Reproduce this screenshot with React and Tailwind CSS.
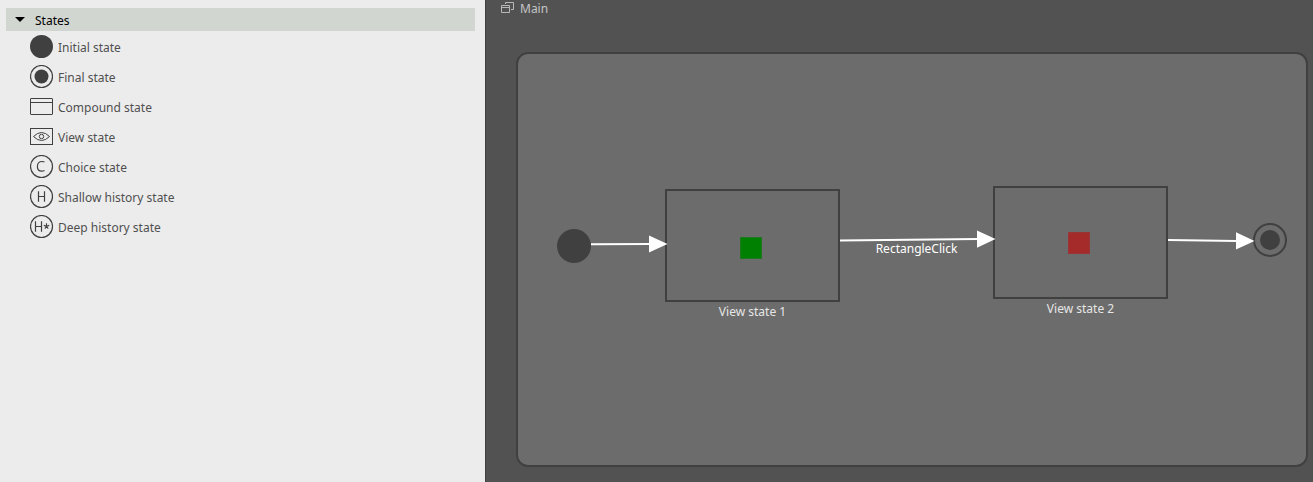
import React, { useState } from "react";

const ring = <circle cx="12" cy="12" r="11" fill="none" stroke="#404040" strokeWidth="1.2" />;

const icons = {
  initial: <circle cx="12" cy="12" r="11.5" fill="#404040" />,
  final: (
    <>
      {ring}
      <circle cx="12" cy="12" r="7" fill="#404040" />
    </>
  ),
  compound: (
    <g fill="none" stroke="#404040">
      <rect x="1" y="4" width="22" height="16" rx="0.5" />
      <path d="M1 8H23" />
    </g>
  ),
  view: (
    <g fill="none" stroke="#404040">
      <rect x="1" y="4" width="22" height="16" />
      <path d="M4 12Q8 8 12 8T20 12Q16 16 12 16T4 12Z" />
      <circle cx="12" cy="12" r="2.2" />
    </g>
  ),
  choice: (
    <>
      {ring}
      <path d="M15 7.6Q14 7 12.6 7C9.8 7 7.9 9 7.9 12C7.9 15 9.6 16.7 12.2 16.7Q13.8 16.7 15 16" fill="none" stroke="#404040" strokeWidth="1.2" />
    </>
  ),
  shallow: (
    <>
      {ring}
      <path d="M9 6.8V17.2M15 6.8V17.2M9 12H15" fill="none" stroke="#404040" strokeWidth="1.2" />
    </>
  ),
  deep: (
    <>
      {ring}
      <path d="M6 6.8V17.2M12 6.8V17.2M6 12H12" fill="none" stroke="#404040" strokeWidth="1.2" />
      <path d="M17 8.8V11.7L14.3 10.9M17 11.7L19.7 10.9M17 11.7L15.3 14.1M17 11.7L18.7 14.1" fill="none" stroke="#404040" strokeWidth="1.1" />
    </>
  ),
};

const states = [
  ["initial", "Initial state"],
  ["final", "Final state"],
  ["compound", "Compound state"],
  ["view", "View state"],
  ["choice", "Choice state"],
  ["shallow", "Shallow history state"],
  ["deep", "Deep history state"],
];

function Palette() {
  const [open, setOpen] = useState(true);
  return (
    <aside className="w-[486px] shrink-0 border-r border-[#404040] bg-[#ececec] pt-2 pr-2.5 pl-1.5">
      <button
        type="button"
        aria-expanded={open}
        onClick={() => setOpen(!open)}
        className="flex h-[23px] w-full items-center gap-2.5 bg-[#d1d6d1] pl-[9px] text-black"
      >
        <svg className="h-[5px] w-2.5" viewBox="0 0 10 5">
          <path d="M0 0H10L5 5Z" />
        </svg>
        <span className="pt-0.5">States</span>
      </button>
      {open && (
        <ul className="pt-px">
          {states.map(([id, label]) => (
            <li key={id}>
              <button type="button" className="flex h-[30px] w-full items-center gap-1 pl-6 text-[#505050]">
                <svg className="size-6 shrink-0" viewBox="0.5 0.5 24 24">
                  {icons[id]}
                </svg>
                <span className="pt-0.5">{label}</span>
              </button>
            </li>
          ))}
        </ul>
      )}
    </aside>
  );
}

function Diagram() {
  return (
    <div className="relative flex-1 rounded-xl border-2 border-[#404040] bg-[#6c6c6c] text-[#e6e6e6]">
      <div className="absolute top-[175px] left-[39px] size-[34px] rounded-full bg-[#404040]" />

      <div className="absolute top-[135px] left-[147px] w-[175px] text-center">
        <div className="flex h-[113px] items-center justify-center border-2 border-[#404040] pt-1 pr-1">
          <div className="size-[22px] border border-[#1f781f] bg-[#008000]" />
        </div>
        <div className="leading-5">View state 1</div>
      </div>

      <div className="absolute top-[132px] left-[475px] w-[175px] text-center">
        <div className="flex h-[113px] items-center justify-center border-2 border-[#404040] pr-1">
          <div className="size-[22px] border border-[#963636] bg-[#a52a2a]" />
        </div>
        <div className="leading-5">View state 2</div>
      </div>

      <div className="absolute top-[169px] left-[735px] flex size-[34px] items-center justify-center rounded-full border-2 border-[#404040]">
        <div className="size-5 rounded-full bg-[#404040]" />
      </div>

      <svg className="absolute top-0 left-0 h-[411px] w-[788px]" viewBox="0 0 788 411" fill="#fff" stroke="none">
        <path d="M73 190.2L132 190" stroke="#fff" strokeWidth="2" />
        <path d="M131 181.4L149.5 189.9L131 198.6Z" />
        <path d="M322 186.6L460 185" stroke="#fff" strokeWidth="2" />
        <path d="M459 176.6L477.5 185L459 193.8Z" />
        <path d="M650 186L719 187" stroke="#fff" strokeWidth="2" />
        <path d="M718 178.2L736.5 187L718 195.4Z" />
      </svg>
      <div className="absolute top-[185px] left-[322px] w-[153px] text-center leading-5 text-white">RectangleClick</div>
    </div>
  );
}

export default function App() {
  return (
    <div className="flex min-h-screen font-['Noto_Sans',sans-serif] text-[12px]">
      <Palette />
      <main className="flex min-w-0 flex-1 flex-col bg-[#525252] pr-[5px] pb-[15px] pl-[30px]">
        <header className="-ml-4 flex h-[52px] items-start gap-1.5 text-[#c4c4c4]">
          <svg className="mt-0.5 ml-px h-3 w-[13px]" viewBox="0 0 13 12" fill="none" stroke="#b8b8b8">
            <path d="M0.5 3.5H8.5V10.5H0.5ZM0.5 5.5H8.5" />
            <path d="M4.5 2V0.5H12.5V7.5H10" />
          </svg>
          <h1 className="leading-[18px]">Main</h1>
        </header>
        <Diagram />
      </main>
    </div>
  );
}
